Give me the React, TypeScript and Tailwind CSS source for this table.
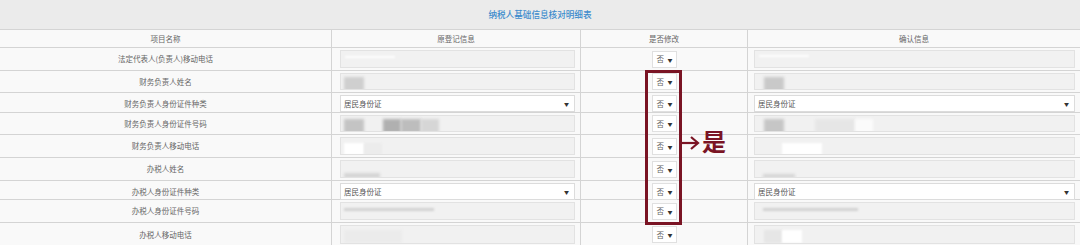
import React from "react";

type Blob = { x: number; y: number; w: number; h: number; c: string; b?: number };
type Row = {
  label: string;
  h: number;
  kind: "input" | "select";
  left?: Blob[];
  right?: Blob[];
};

const rows: Row[] = [
  { label: "法定代表人(负责人)移动电话", h: 23, kind: "input", left: [{ x: 4, y: 5, w: 50, h: 2, c: "#ffffff", b: 1 }], right: [{ x: 4, y: 4, w: 50, h: 2, c: "#ffffff", b: 1 }] },
  { label: "财务负责人姓名", h: 22, kind: "input", left: [{ x: 3, y: 3, w: 20, h: 14, c: "#cfcfcf", b: 1.5 }], right: [{ x: 9, y: 3, w: 20, h: 15, c: "#c9c9c9", b: 1.5 }] },
  { label: "财务负责人身份证件种类", h: 20, kind: "select" },
  {
    label: "财务负责人身份证件号码",
    h: 22,
    kind: "input",
    left: [
      { x: 3, y: 3, w: 20, h: 14, c: "#c4c4c4", b: 1.5 },
      { x: 42, y: 3, w: 18, h: 14, c: "#b0b0b0", b: 1.5 },
      { x: 60, y: 3, w: 20, h: 14, c: "#bdbdbd", b: 1.5 },
      { x: 80, y: 3, w: 18, h: 14, c: "#d6d6d6", b: 1.5 },
    ],
    right: [
      { x: 9, y: 3, w: 20, h: 15, c: "#c6c6c6", b: 1.5 },
      { x: 60, y: 3, w: 40, h: 14, c: "#e6e6e6", b: 1.5 },
      { x: 100, y: 3, w: 18, h: 14, c: "#fbfbfb", b: 1.5 },
    ],
  },
  {
    label: "财务负责人移动电话",
    h: 23,
    kind: "input",
    left: [
      { x: 3, y: 5, w: 20, h: 12, c: "#ffffff", b: 1 },
      { x: 23, y: 5, w: 18, h: 12, c: "#ececec", b: 1 },
    ],
    right: [
      { x: 27, y: 5, w: 40, h: 12, c: "#ffffff", b: 1 },
    ],
  },
  { label: "办税人姓名", h: 23, kind: "input", left: [{ x: 3, y: 12, w: 36, h: 5, c: "#d4d4d4", b: 1.5 }], right: [{ x: 8, y: 13, w: 32, h: 4, c: "#d4d4d4", b: 1.5 }] },
  { label: "办税人身份证件种类", h: 19, kind: "select" },
  { label: "办税人身份证件号码", h: 23, kind: "input", left: [{ x: 3, y: 5, w: 90, h: 3, c: "#d2d2d2", b: 1 }], right: [{ x: 8, y: 5, w: 95, h: 3, c: "#d2d2d2", b: 1 }] },
  { label: "办税人移动电话", h: 24, kind: "input", left: [{ x: 3, y: 4, w: 58, h: 13, c: "#ebebeb", b: 1.5 }], right: [{ x: 9, y: 4, w: 18, h: 13, c: "#e6e6e6", b: 1 }, { x: 27, y: 4, w: 20, h: 13, c: "#ffffff", b: 1 }] },
];

function Blobs({ items }: { items?: Blob[] }) {
  return (
    <>
      {(items || []).map((b, i) => (
        <div
          key={i}
          className="absolute"
          style={{ left: b.x, top: b.y, width: b.w, height: b.h, background: b.c, filter: `blur(${b.b ?? 1}px)` }}
        />
      ))}
    </>
  );
}

function TextInput({ items }: { items?: Blob[] }) {
  return (
    <div className="relative h-full w-full overflow-hidden border border-[#e2e2e2] bg-[#f1f1f1]">
      <Blobs items={items} />
    </div>
  );
}

function Select() {
  return (
    <div className="flex h-[17px] w-full items-center justify-between border border-[#dcdcdc] bg-white pl-[3px] pr-[5px]">
      <span className="text-[7.5px] text-[#555]">居民身份证</span>
      <span className="text-[5px] text-[#333]">▼</span>
    </div>
  );
}

function MiniSelect() {
  return (
    <div className="flex h-[17px] w-[25px] items-center justify-between border border-[#e0e0e0] bg-white pl-[4px] pr-[3px]">
      <span className="text-[7.5px] leading-none text-[#666]">否</span>
      <span className="text-[5px] leading-none text-[#333]">▼</span>
    </div>
  );
}

export default function App() {
  return (
    <div
      className="relative h-[245px] w-[1080px] overflow-hidden bg-[#f9f9f9] text-[#666]"
      style={{ fontFamily: '"Noto Sans CJK SC", "Noto Sans", sans-serif' }}
    >
      <div className="flex h-[30px] items-center justify-center border-b border-[#d4d4d4] bg-[#ebebeb]">
        <span className="text-[8.6px] font-medium text-[#3d8bcd]">纳税人基础信息核对明细表</span>
      </div>
      <div className="grid h-[18px] grid-cols-[332px_249px_167px_1fr] border-b border-[#d4d4d4] text-[7.5px] text-[#666]">
        <div className="flex items-center justify-center border-r border-[#d4d4d4]">项目名称</div>
        <div className="flex items-center justify-center border-r border-[#d4d4d4]">原登记信息</div>
        <div className="flex items-center justify-center border-r border-[#d4d4d4]">是否修改</div>
        <div className="flex items-center justify-center">确认信息</div>
      </div>
      {rows.map((r, i) => (
        <div
          key={i}
          className="grid grid-cols-[332px_249px_167px_1fr] border-b border-[#d4d4d4] text-[7.5px]"
          style={{ height: r.h }}
        >
          <div className="flex items-center justify-center border-r border-[#d4d4d4] text-[#666]">{r.label}</div>
          <div className="flex items-center border-r border-[#d4d4d4] py-[2px] pl-[8px] pr-[5px]">
            {r.kind === "select" ? <Select /> : <TextInput items={r.left} />}
          </div>
          <div className="flex items-center justify-center border-r border-[#d4d4d4]">
            <MiniSelect />
          </div>
          <div className="flex items-center py-[2px] pl-[6px] pr-[5px]">
            {r.kind === "select" ? <Select /> : <TextInput items={r.right} />}
          </div>
        </div>
      ))}

      {/* annotation overlay */}
      <div className="absolute left-[645px] top-[70px] h-[155px] w-[37px] border-[3px] border-[#7a1424]" />
      <svg className="absolute left-[681px] top-[135px]" width="20" height="16" viewBox="0 0 20 16">
        <line x1="0" y1="8" x2="17" y2="8" stroke="#7a1424" strokeWidth="2.2" />
        <polyline points="10,2 17,8 10,14" fill="none" stroke="#7a1424" strokeWidth="2.2" />
      </svg>
      <div className="absolute left-[702px] top-[127px] text-[24px] font-bold leading-[28px] text-[#7a1424]">是</div>
    </div>
  );
}
